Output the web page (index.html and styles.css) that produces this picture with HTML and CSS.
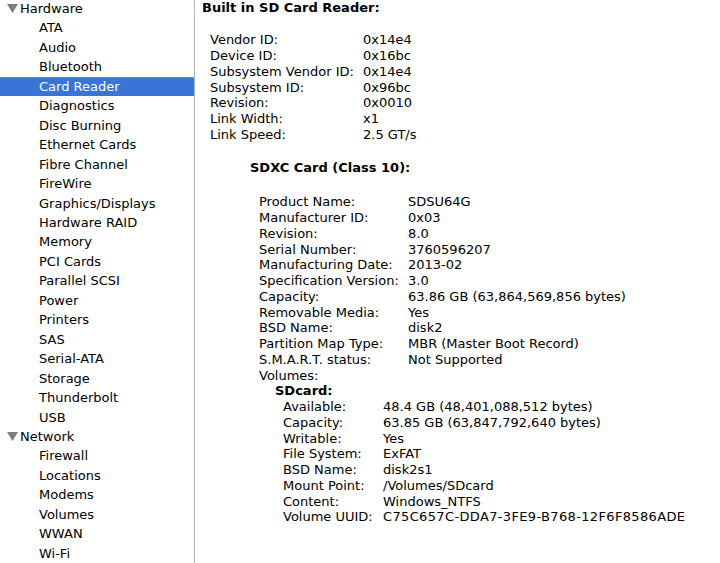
FILE: index.html
```html
<!DOCTYPE html>
<html lang="en">
<head>
    <meta charset="UTF-8">
    <title>System Information</title>
    <link rel="stylesheet" href="styles.css">
</head>
<body>
    <div class="window">
        <ul class="sidebar">
            <li class="group"><svg class="disclosure" width="11" height="9" viewBox="0 0 11 9"><polygon points="0,0 11,0 5.5,9" /></svg>Hardware</li>
            <li>ATA</li>
            <li>Audio</li>
            <li>Bluetooth</li>
            <li class="selected">Card Reader</li>
            <li>Diagnostics</li>
            <li>Disc Burning</li>
            <li>Ethernet Cards</li>
            <li>Fibre Channel</li>
            <li>FireWire</li>
            <li>Graphics/Displays</li>
            <li>Hardware RAID</li>
            <li>Memory</li>
            <li>PCI Cards</li>
            <li>Parallel SCSI</li>
            <li>Power</li>
            <li>Printers</li>
            <li>SAS</li>
            <li>Serial-ATA</li>
            <li>Storage</li>
            <li>Thunderbolt</li>
            <li>USB</li>
            <li class="group"><svg class="disclosure" width="11" height="9" viewBox="0 0 11 9"><polygon points="0,0 11,0 5.5,9" /></svg>Network</li>
            <li>Firewall</li>
            <li>Locations</li>
            <li>Modems</li>
            <li>Volumes</li>
            <li>WWAN</li>
            <li>Wi-Fi</li>
        </ul>

        <div class="details">
            <h2 class="title">Built in SD Card Reader:</h2>

            <dl class="props reader">
                <dt>Vendor ID:</dt><dd>0x14e4</dd>
                <dt>Device ID:</dt><dd>0x16bc</dd>
                <dt>Subsystem Vendor ID:</dt><dd>0x14e4</dd>
                <dt>Subsystem ID:</dt><dd>0x96bc</dd>
                <dt>Revision:</dt><dd>0x0010</dd>
                <dt>Link Width:</dt><dd>x1</dd>
                <dt>Link Speed:</dt><dd>2.5 GT/s</dd>
            </dl>

            <h3 class="subtitle">SDXC Card (Class 10):</h3>

            <dl class="props card">
                <dt>Product Name:</dt><dd>SDSU64G</dd>
                <dt>Manufacturer ID:</dt><dd>0x03</dd>
                <dt>Revision:</dt><dd>8.0</dd>
                <dt>Serial Number:</dt><dd>3760596207</dd>
                <dt>Manufacturing Date:</dt><dd>2013-02</dd>
                <dt>Specification Version:</dt><dd>3.0</dd>
                <dt>Capacity:</dt><dd>63.86 GB (63,864,569,856 bytes)</dd>
                <dt>Removable Media:</dt><dd>Yes</dd>
                <dt>BSD Name:</dt><dd>disk2</dd>
                <dt>Partition Map Type:</dt><dd>MBR (Master Boot Record)</dd>
                <dt>S.M.A.R.T. status:</dt><dd>Not Supported</dd>
            </dl>

            <div class="volumes">
                <div class="volumes-label">Volumes:</div>
                <div class="volume-name">SDcard:</div>
                <dl class="props volume">
                    <dt>Available:</dt><dd>48.4 GB (48,401,088,512 bytes)</dd>
                    <dt>Capacity:</dt><dd>63.85 GB (63,847,792,640 bytes)</dd>
                    <dt>Writable:</dt><dd>Yes</dd>
                    <dt>File System:</dt><dd>ExFAT</dd>
                    <dt>BSD Name:</dt><dd>disk2s1</dd>
                    <dt>Mount Point:</dt><dd>/Volumes/SDcard</dd>
                    <dt>Content:</dt><dd>Windows_NTFS</dd>
                    <dt>Volume UUID:</dt><dd class="uuid">C75C657C-DDA7-3FE9-B768-12F6F8586ADE</dd>
                </dl>
            </div>
        </div>
    </div>
</body>
</html>
```

FILE: styles.css
```css
body {
    margin: 0;
    padding: 0;
    background-color: #ffffff;
    font-family: "DejaVu Sans", Verdana, sans-serif;
    font-size: 13px;
    color: #000000;
    overflow: hidden;
}

.window {
    display: flex;
    width: 720px;
    height: 563px;
}

/* Barra lateral */
.sidebar {
    list-style-type: none;
    margin: -1px 0 0 0;
    padding: 0;
    width: 194px;
    flex-shrink: 0;
    border-right: 1px solid #b4b4b4;
    height: 564px;
}

.sidebar li {
    height: 19.46px;
    line-height: 19.46px;
    padding-left: 39px;
    white-space: nowrap;
    box-sizing: border-box;
}

.sidebar li.group {
    display: flex;
    align-items: center;
    padding-left: 7px;
}

.disclosure {
    fill: #7d7d7d;
    margin-right: 2px;
    margin-top: -1px;
}

.sidebar li.selected {
    background-color: #3875d7;
    border-top: 1px solid #5a8fe0;
    line-height: 18px;
    color: #ffffff;
}

/* Panel de detalles */
.details {
    flex: 1;
    padding-left: 7px;
    line-height: 15.75px;
}

.title,
.subtitle {
    font-size: 13px;
    font-weight: bold;
    margin: 0;
}

.title {
    margin-bottom: 16.5px;
}

.subtitle {
    margin: 0 0 19px 48px;
}

.props {
    display: grid;
    margin: 0;
    white-space: nowrap;
}

.props dt,
.props dd {
    margin: 0;
}

.reader {
    grid-template-columns: 153px auto;
    margin-left: 8px;
    margin-bottom: 17px;
}

.card {
    grid-template-columns: 149px auto;
    margin-left: 57px;
}

.volumes {
    margin-left: 57px;
}

.volume-name {
    font-weight: bold;
    margin-left: 16px;
}

.volume {
    grid-template-columns: 100px auto;
    margin-left: 24px;
}

.uuid {
    letter-spacing: 0.35px;
}
```
